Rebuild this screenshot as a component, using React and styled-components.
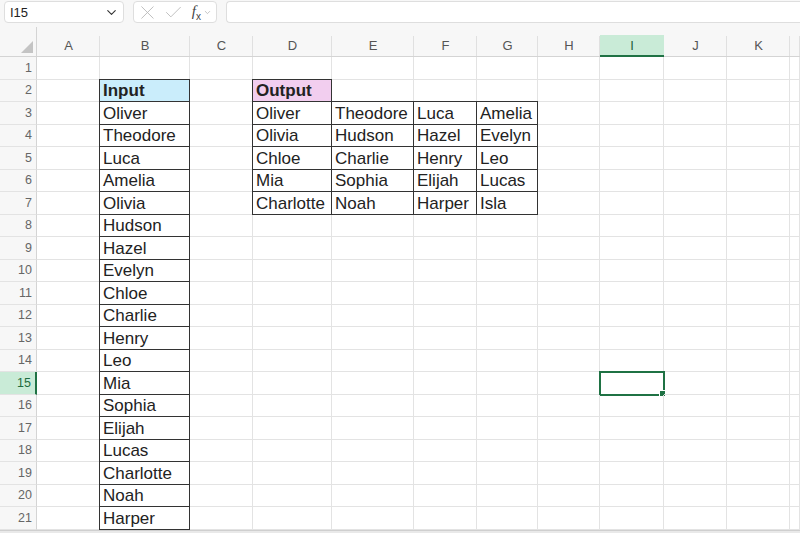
import React from "react";
import styled, { createGlobalStyle } from "styled-components";
import { X, Check, ChevronDown } from "lucide-react";

const GlobalStyle = createGlobalStyle`
	html, body {
		margin: 0;
		padding: 0;
		background: #ffffff;
		font-family: "Liberation Sans", Arial, sans-serif;
		overflow: hidden;
	}
`;

const COLUMNS = ["A", "B", "C", "D", "E", "F", "G", "H", "I", "J", "K"];
const WIDTHS = [63, 90, 63, 79, 82, 63, 61, 62, 64, 63, 63];
const ROW_COUNT = 21;
const ACTIVE_COL = "I";
const ACTIVE_ROW = 15;

const inputNames = [
	"Oliver", "Theodore", "Luca", "Amelia", "Olivia", "Hudson", "Hazel",
	"Evelyn", "Chloe", "Charlie", "Henry", "Leo", "Mia", "Sophia", "Elijah",
	"Lucas", "Charlotte", "Noah", "Harper",
];

const output = [
	["Oliver", "Theodore", "Luca", "Amelia"],
	["Olivia", "Hudson", "Hazel", "Evelyn"],
	["Chloe", "Charlie", "Henry", "Leo"],
	["Mia", "Sophia", "Elijah", "Lucas"],
	["Charlotte", "Noah", "Harper", "Isla"],
];

// lookup of "B3" -> cell content and formatting
const cells = {};
cells.B2 = { text: "Input", bold: true, fill: "#caedfb", boxed: true };
inputNames.forEach((n, i) => {
	cells[`B${i + 3}`] = { text: n, boxed: true };
});
cells.D2 = { text: "Output", bold: true, fill: "#f2ceef", boxed: true };
output.forEach((row, r) => {
	row.forEach((n, c) => {
		cells[`${"DEFG"[c]}${r + 3}`] = { text: n, boxed: true };
	});
});

const App = () => {
	const rows = Array.from({ length: ROW_COUNT }, (_, i) => i + 1);
	return (
		<Page>
			<GlobalStyle />
			<Toolbar>
				<NameBox>
					<span>I15</span>
					<ChevronDown size={15} strokeWidth={1.8} color="#333" />
				</NameBox>
				<FormulaTools>
					<X size={23} strokeWidth={0.95} color="#b8b8b8" />
					<Check size={21} strokeWidth={1} color="#b8b8b8" />
					<Fx>
						f<sub>x</sub>
					</Fx>
					<ChevronDown size={9} strokeWidth={1.5} color="#999" />
				</FormulaTools>
				<FormulaInput />
			</Toolbar>
			<Grid>
				<Corner>
					<svg width="12" height="12" viewBox="0 0 12 12">
						<polygon points="12,0 12,12 0,12" fill="#c4c4c4" />
					</svg>
				</Corner>
				{COLUMNS.map((c) => (
					<ColHead key={c} $active={c === ACTIVE_COL}>
						{c}
					</ColHead>
				))}
				<ColHead />
				{rows.map((r) => (
					<React.Fragment key={r}>
						<RowHead $active={r === ACTIVE_ROW}>{r}</RowHead>
						{COLUMNS.map((c) => {
							const cell = cells[`${c}${r}`];
							return (
								<Cell
									key={c}
									$fill={cell?.fill}
									$bold={cell?.bold}
									$boxed={cell?.boxed}
									$selected={c === ACTIVE_COL && r === ACTIVE_ROW}
								>
									{cell?.text}
								</Cell>
							);
						})}
						<Cell />
					</React.Fragment>
				))}
			</Grid>
			<BottomBar />
		</Page>
	);
};

export default App;

const Page = styled.div`
	width: 800px;
	height: 533px;
	overflow: hidden;
	background: #fff;
	display: flex;
	flex-direction: column;
`;

const Toolbar = styled.div`
	height: 27px;
	flex-shrink: 0;
	background: #f7f7f7;
	display: flex;
	align-items: flex-start;
	padding: 1px 0 0 4px;
	box-sizing: border-box;
	gap: 9px;
`;

const NameBox = styled.div`
	width: 120px;
	height: 22px;
	box-sizing: border-box;
	background: #fff;
	border: 1px solid #dedede;
	border-radius: 4px;
	display: flex;
	align-items: center;
	justify-content: space-between;
	padding: 0 4px 0 5px;
	font-size: 13px;
	color: #222;
`;

const FormulaTools = styled.div`
	width: 84px;
	height: 22px;
	box-sizing: border-box;
	background: #fff;
	border: 1px solid #dedede;
	border-radius: 4px;
	display: flex;
	align-items: center;
	gap: 4px;
	padding: 0 4px 0 2px;
`;

const Fx = styled.span`
	font-family: "Liberation Serif", "Times New Roman", serif;
	font-style: italic;
	font-size: 15px;
	color: #444;
	margin-left: 4px;
	margin-right: -2px;

	sub {
		font-size: 10px;
		font-style: normal;
		font-family: "Liberation Sans", Arial, sans-serif;
	}
`;

const FormulaInput = styled.div`
	flex: 1;
	height: 22px;
	box-sizing: border-box;
	background: #fff;
	border: 1px solid #dedede;
	border-right: none;
	border-radius: 4px 0 0 4px;
`;

const Grid = styled.div`
	display: grid;
	grid-template-columns: 37px ${WIDTHS.map((w) => `${w}px`).join(" ")} 1fr;
	grid-template-rows: 30px repeat(${ROW_COUNT}, 22.5px);
	background: #fff;
	flex-shrink: 0;
`;

const Corner = styled.div`
	background: #f7f7f7;
	border-right: 1px solid #d4d4d4;
	border-bottom: 1px solid #d4d4d4;
	display: flex;
	align-items: flex-end;
	justify-content: flex-end;
	padding: 0 3px 3px 0;
`;

const ColHead = styled.div`
	background-color: #f7f7f7;
	border-bottom: 1px solid #d4d4d4;
	display: flex;
	align-items: flex-end;
	justify-content: center;
	font-size: 13px;
	color: #555;
	padding-bottom: 3px;
	box-sizing: border-box;
	background-image: linear-gradient(#e0e0e0, #e0e0e0);
	background-size: 1px 20px;
	background-position: right bottom;
	background-repeat: no-repeat;

	${(p) =>
		p.$active &&
		`
		background-image: linear-gradient(#c9ebd7, #c9ebd7);
		background-size: 100% 20px;
		background-position: left bottom;
		border-bottom: 2px solid #1f7244;
		padding-bottom: 2px;
		color: #1f5e3a;
	`}
`;

const RowHead = styled.div`
	background: ${(p) => (p.$active ? "#c9ebd7" : "#f7f7f7")};
	border-right: ${(p) => (p.$active ? "2px solid #1f7244" : "1px solid #d4d4d4")};
	border-bottom: 1px solid #e3e3e3;
	display: flex;
	align-items: center;
	justify-content: flex-end;
	padding-right: 4px;
	font-size: 12.5px;
	color: ${(p) => (p.$active ? "#1f6b40" : "#666")};
	box-sizing: border-box;
`;

const Cell = styled.div`
	position: relative;
	background: ${(p) => p.$fill || "transparent"};
	border-right: 1px solid ${(p) => (p.$boxed ? "#333" : "#e3e3e3")};
	border-bottom: 1px solid ${(p) => (p.$boxed ? "#333" : "#e3e3e3")};
	box-shadow: ${(p) =>
		p.$boxed ? "-1px 0 0 0 #333, 0 -1px 0 0 #333, -1px -1px 0 0 #333" : "none"};
	display: flex;
	align-items: center;
	padding: 2px 0 0 3px;
	box-sizing: border-box;
	font-size: 17px;
	font-weight: ${(p) => (p.$bold ? 700 : 400)};
	color: #222;
	white-space: nowrap;

	${(p) =>
		p.$selected &&
		`
		outline: 2px solid #1f7244;
		outline-offset: -1px;
		&::after {
			content: "";
			position: absolute;
			right: -3px;
			bottom: -3px;
			width: 5px;
			height: 5px;
			background: #1f7244;
			border: 1px solid #fff;
		}
	`}
`;

const BottomBar = styled.div`
	flex: 1;
	background: #e9e9e9;
	border-top: 1px solid #cfcfcf;
`;
